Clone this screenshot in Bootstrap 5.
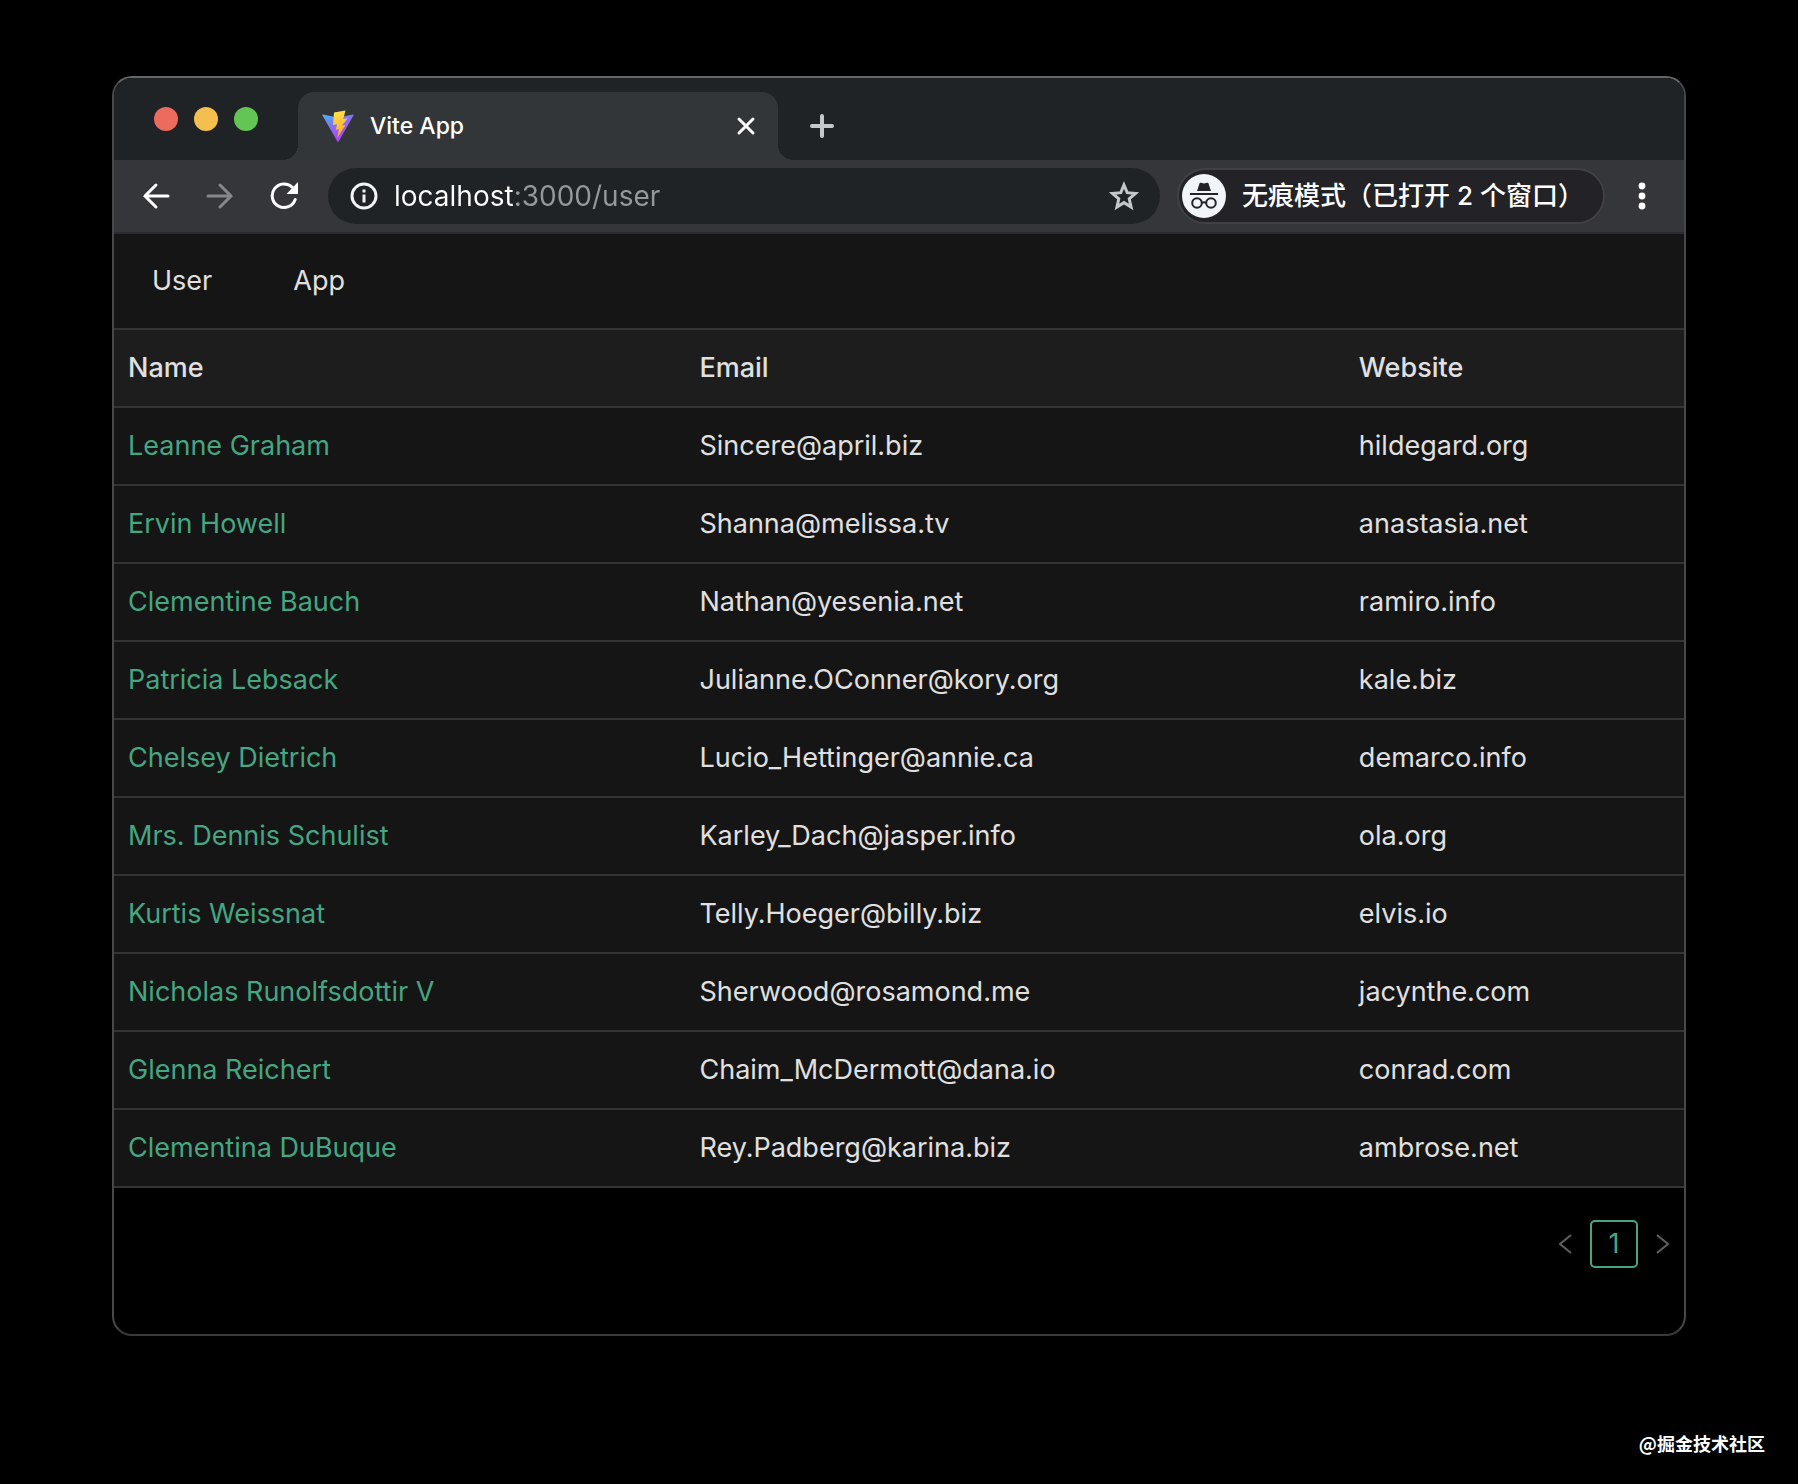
<!DOCTYPE html>
<html lang="zh-CN">
<head>
<meta charset="utf-8">
<meta name="viewport" content="width=device-width, initial-scale=1">
<title>Vite App</title>
<link href="https://cdn.jsdelivr.net/npm/bootstrap@5.3.0/dist/css/bootstrap.min.css" rel="stylesheet">
<style>
  body { background: #000; color: #e0e0e0; font: 400 27px/42px Inter, "Noto Sans CJK SC", sans-serif; font-variant-ligatures: none; }
  .desk { padding: 76px 112px 0; }
  .win { border: 2px solid #484848; border-top-color: #666; border-bottom-color: #3a3a3a; border-radius: 20px; overflow: hidden; background: #000; }
  .strip { background: #202325; height: 82px; padding-left: 40px; }
  .lights { gap: 16px; }
  .light { width: 24px; height: 24px; border-radius: 50%; }
  .red { background: #ed6a5e; } .amber { background: #f5bf4f; } .green { background: #62c554; }
  .tab-page { position: relative; width: 480px; height: 68px; margin-left: 40px; padding: 0 22px 0 24px; background: #333639; border-radius: 16px 16px 0 0; color: #fff; font-size: 23px; font-weight: 500; }
  .tab-page::before, .tab-page::after { content: ""; position: absolute; bottom: 0; width: 16px; height: 16px; }
  .tab-page::before { left: -16px; background: radial-gradient(circle at 0 0, transparent 16px, #333639 16px); }
  .tab-page::after { right: -16px; background: radial-gradient(circle at 100% 0, transparent 16px, #333639 16px); }
  .plain { background: none; border: 0; padding: 0; color: #fff; display: flex; align-items: center; }
  .plus { height: 68px; margin-left: 32px; }
  .bar { background: #35363a; height: 74px; padding: 0 38px 0 28px; border-bottom: 2px solid #2b2b2c; }
  .history { gap: 36px; }
  .omni { height: 56px; border-radius: 28px; background: #202325; padding: 0 20px 0 22px; margin: 0 17px 0 30px; }
  .url { border: 0; outline: 0; padding: 0; margin-left: 16px; font-size: 28px; color: transparent; background: linear-gradient(90deg, #fff 122px, #96999c 122px); -webkit-background-clip: text; background-clip: text; }
  .incog { height: 56px; width: 428px; border-radius: 28px; background: #232227; border: 2px solid #414145; padding: 0 3px; color: #fff; font-size: 26px; font-weight: 500; margin-right: 33px; white-space: nowrap; }
  .menu-top { background: #151515; height: 96px; padding-left: 38px; gap: 81px; border-bottom: 2px solid #343434; }
  .menu-top a { color: #e0e0e0; text-decoration: none; }
  .users { table-layout: fixed; margin: 0; width: 100%; border-collapse: separate; border-spacing: 0; }
  .users > thead > tr > th, .users > tbody > tr > td { background: #151515; color: #e0e0e0; padding: 17px 14px; height: 78px; border-width: 0 0 2px; border-bottom: 2px solid #343434; box-shadow: none; font-weight: 400; }
  .users > thead > tr > th { background: #1d1d1d; font-weight: 500; }
  .users a { color: #45a682; text-decoration: none; }
  .c-name { width: 36.4%; } .c-mail { width: 42%; }
  .pager { padding: 32px 14px 66px; gap: 18px; }
  .pager .plain { color: #606060; }
  .pager .current { width: 48px; height: 48px; border: 2px solid #45a682; border-radius: 5px; color: #45a682; background: none; padding: 0; line-height: 44px; }
  .stamp { color: #fff; font: 700 18px/26px "Noto Sans CJK SC", sans-serif; padding: 94px 33px 0 0; text-align: right; }
</style>
<script src="https://cdn.jsdelivr.net/npm/bootstrap@5.3.0/dist/js/bootstrap.bundle.min.js"></script>
</head>
<body>
<div class="desk">
  <main class="win">
    <div class="strip d-flex align-items-end">
      <div class="lights d-flex align-self-center">
        <span class="light red"></span><span class="light amber"></span><span class="light green"></span>
      </div>
      <div class="tab-page d-flex align-items-center">
        <svg width="32" height="32" viewBox="0 0 32 32" aria-hidden="true">
          <defs>
            <linearGradient id="vg" x1="0" y1="0" x2=".6" y2="1"><stop offset="0" stop-color="#41b8f5"/><stop offset=".5" stop-color="#8b6cf0"/><stop offset="1" stop-color="#b63df5"/></linearGradient>
            <linearGradient id="bg" x1=".4" y1="0" x2=".6" y2="1"><stop offset="0" stop-color="#ffe14d"/><stop offset="1" stop-color="#ffa51e"/></linearGradient>
          </defs>
          <path d="M1 4.500 16 7.500 31 4.500Q32 4.500 31.500 5.500L16.600 31.500Q16 32.500 15.400 31.500L.5 5.500Q0 4.500 1 4.500Z" fill="url(#vg)"/>
          <path d="M23.500 .5 12 2.500 11 15 15 14.300 13.800 20 16.800 19 15.500 27.500 23.500 15 20 15.600 25.500 8.500 21.300 9Z" fill="url(#bg)"/>
        </svg>
        <span class="ms-3">Vite App</span>
        <button class="plain ms-auto" type="button" aria-label="Close tab">
          <svg width="20" height="20" viewBox="0 0 20 20" stroke="#fff" stroke-width="3" stroke-linecap="round"><path d="M3 3 17 17M17 3 3 17"/></svg>
        </button>
      </div>
      <button class="plain plus" type="button" aria-label="New tab">
        <svg width="24" height="24" viewBox="0 0 24 24" stroke="#c4c8cb" stroke-width="4" stroke-linecap="round"><path d="M12 2V22M2 12H22"/></svg>
      </button>
    </div>
    <div class="bar d-flex align-items-center">
      <div class="history d-flex">
        <button class="plain" type="button" aria-label="Back"><svg width="28" height="28" viewBox="0 0 28 28" fill="none" stroke="#fff" stroke-width="3" stroke-linecap="round"><path d="M26 14H3M14 3 3 14 14 25"/></svg></button>
        <button class="plain" type="button" aria-label="Forward"><svg width="28" height="28" viewBox="0 0 28 28" fill="none" stroke="#85878a" stroke-width="3" stroke-linecap="round"><path d="M2 14H25M14 3 25 14 14 25"/></svg></button>
        <button class="plain" type="button" aria-label="Reload"><svg width="28" height="28" viewBox="0 0 28 28" fill="none" stroke="#fff" stroke-width="3" stroke-linecap="round"><path d="M25.200 17.500A11.800 11.800 0 1 1 22.500 5.500"/><path d="M28 0V12H16.500Z" fill="#fff" stroke="none"/></svg></button>
      </div>
      <div class="omni d-flex align-items-center flex-grow-1">
        <svg width="28" height="28" viewBox="0 0 28 28" fill="none" stroke="#f0f2f4" stroke-width="3"><circle cx="14" cy="14" r="12"/><path d="M14 12.500V20.500M14 7.500V10.500"/></svg>
        <input class="url flex-grow-1" type="text" aria-label="Address" value="localhost:3000/user">
        <button class="plain" type="button" aria-label="Bookmark"><svg width="32" height="30" viewBox="0 0 32 30" fill="none" stroke="#c4c8cb" stroke-width="3"><path d="M16 4 19.200 11.700 27.500 12.400 21.200 17.800 23.100 26 16 21.600 8.900 26 10.800 17.800 4.500 12.400 12.800 11.700Z"/></svg></button>
      </div>
      <div class="incog d-flex align-items-center">
        <svg width="44" height="44" viewBox="0 0 44 44"><circle cx="22" cy="22" r="22" fill="#f1f4f8"/><path d="M15 17 17.500 9.500Q18 8.500 19 8.800L22 9.500 25 8.800Q26 8.500 26.500 9.500L29 17Z" fill="#232227"/><path d="M8 20H36" stroke="#232227" stroke-width="2"/><g fill="none" stroke="#232227" stroke-width="2"><circle cx="15" cy="29" r="4.800"/><circle cx="29" cy="29" r="4.800"/><path d="M19.800 29Q22 27.500 24.200 29"/></g></svg>
        <span class="ms-3">无痕模式（已打开 2 个窗口）</span>
      </div>
      <button class="plain" type="button" aria-label="Menu"><svg width="8" height="28" viewBox="0 0 8 28" fill="#fff"><circle cx="4" cy="4" r="3.400"/><circle cx="4" cy="14" r="3.400"/><circle cx="4" cy="24" r="3.400"/></svg></button>
    </div>
    <nav class="menu-top d-flex align-items-center">
      <a href="#user">User</a><a href="#app">App</a>
    </nav>
    <table class="table users">
      <thead><tr><th class="c-name" scope="col">Name</th><th class="c-mail" scope="col">Email</th><th scope="col">Website</th></tr></thead>
      <tbody>
        <tr><td><a href="#1">Leanne Graham</a></td><td>Sincere@april.biz</td><td>hildegard.org</td></tr>
        <tr><td><a href="#2">Ervin Howell</a></td><td>Shanna@melissa.tv</td><td>anastasia.net</td></tr>
        <tr><td><a href="#3">Clementine Bauch</a></td><td>Nathan@yesenia.net</td><td>ramiro.info</td></tr>
        <tr><td><a href="#4">Patricia Lebsack</a></td><td>Julianne.OConner@kory.org</td><td>kale.biz</td></tr>
        <tr><td><a href="#5">Chelsey Dietrich</a></td><td>Lucio_Hettinger@annie.ca</td><td>demarco.info</td></tr>
        <tr><td><a href="#6">Mrs. Dennis Schulist</a></td><td>Karley_Dach@jasper.info</td><td>ola.org</td></tr>
        <tr><td><a href="#7">Kurtis Weissnat</a></td><td>Telly.Hoeger@billy.biz</td><td>elvis.io</td></tr>
        <tr><td><a href="#8">Nicholas Runolfsdottir V</a></td><td>Sherwood@rosamond.me</td><td>jacynthe.com</td></tr>
        <tr><td><a href="#9">Glenna Reichert</a></td><td>Chaim_McDermott@dana.io</td><td>conrad.com</td></tr>
        <tr><td><a href="#10">Clementina DuBuque</a></td><td>Rey.Padberg@karina.biz</td><td>ambrose.net</td></tr>
      </tbody>
    </table>
    <div class="pager d-flex justify-content-end align-items-center">
      <button class="plain" type="button" aria-label="Previous page"><svg width="14" height="20" viewBox="0 0 14 20" fill="none" stroke="currentColor" stroke-width="2"><path d="M13 1 2 10 13 19"/></svg></button>
      <button class="current" type="button">1</button>
      <button class="plain" type="button" aria-label="Next page"><svg width="14" height="20" viewBox="0 0 14 20" fill="none" stroke="currentColor" stroke-width="2"><path d="M1 1 12 10 1 19"/></svg></button>
    </div>
  </main>
</div>
<footer class="stamp">@掘金技术社区</footer>
</body>
</html>
